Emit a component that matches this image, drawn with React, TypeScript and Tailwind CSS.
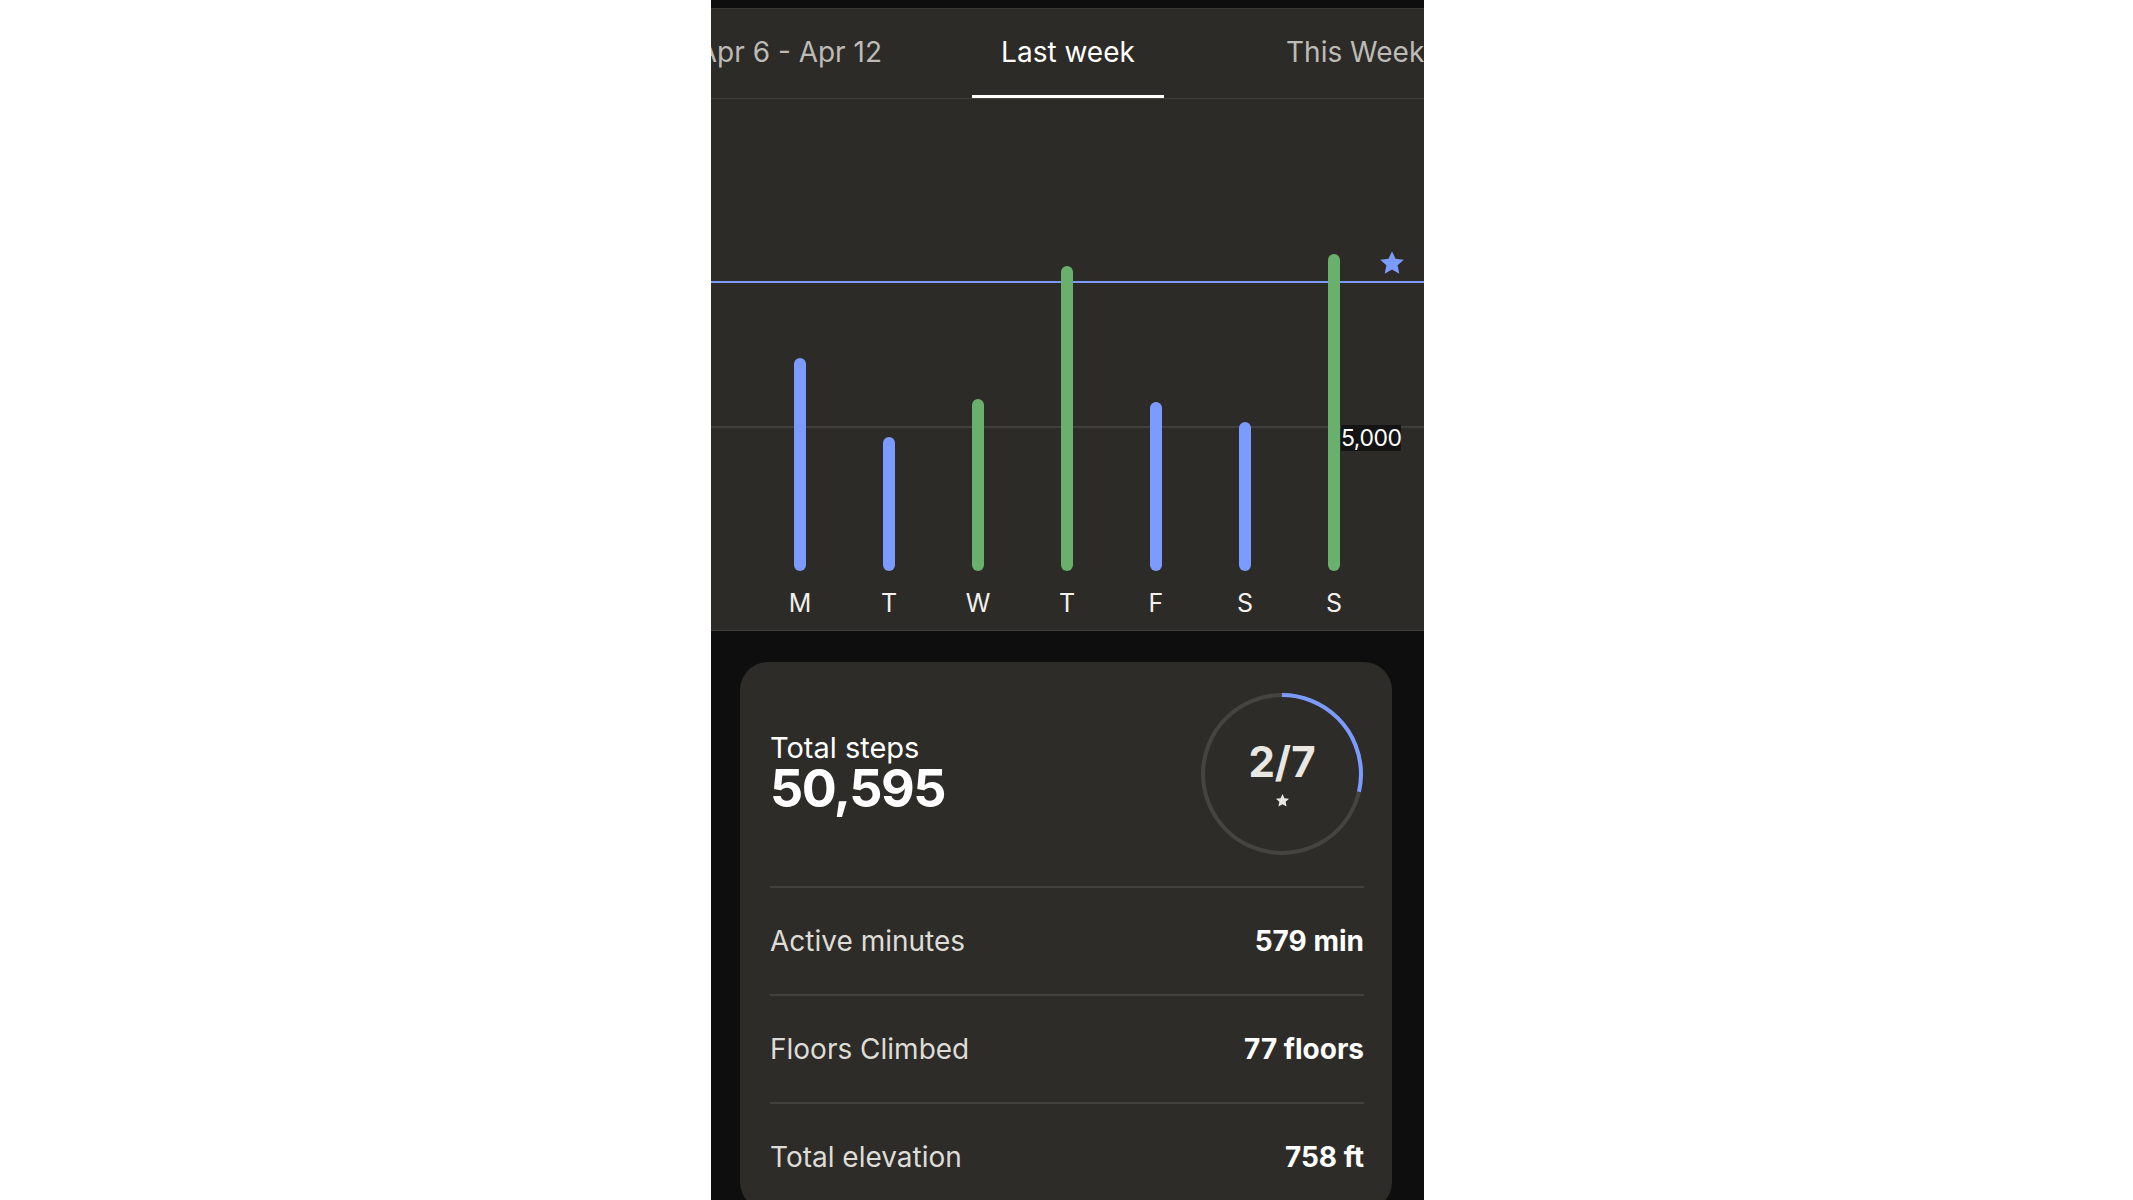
import React from 'react';

const days = [
  { label: 'M', top: 259, color: '#7c9bff' },
  { label: 'T', top: 338, color: '#7c9bff' },
  { label: 'W', top: 300, color: '#69b06d' },
  { label: 'T', top: 167, color: '#69b06d' },
  { label: 'F', top: 303, color: '#7c9bff' },
  { label: 'S', top: 323, color: '#7c9bff' },
  { label: 'S', top: 155, color: '#69b06d' },
];

const stats = [
  { label: 'Active minutes', value: '579 min' },
  { label: 'Floors Climbed', value: '77 floors' },
  { label: 'Total elevation', value: '758 ft' },
];

const STAR = '12,1.5 15.1,8.3 22.5,9.1 17,14.1 18.5,21.5 12,17.8 5.5,21.5 7,14.1 1.5,9.1 8.9,8.3';

const BAR_BOTTOM = 472;

function StepsRing() {
  const r = 79;
  const c = 2 * Math.PI * r;
  return (
    <div className="relative w-[170px] h-[170px] shrink-0">
      <svg width="170" height="170" viewBox="0 0 170 170" className="absolute inset-0">
        <circle cx="85" cy="85" r={r} fill="none" stroke="#45443f" strokeWidth="4" />
        <circle
          cx="85"
          cy="85"
          r={r}
          fill="none"
          stroke="#7c9bff"
          strokeWidth="4"
          strokeDasharray={`${(c * 2) / 7} ${c}`}
          transform="rotate(-90 85 85)"
        />
      </svg>
      <div className="absolute inset-0 flex flex-col items-center justify-center">
        <span className="text-[42px] font-bold leading-none text-[#e9e7e1]">2/7</span>
        <svg width="15" height="15" viewBox="0 0 24 24" className="mt-[10px]">
          <polygon points={STAR} fill="#e9e7e1" />
        </svg>
      </div>
    </div>
  );
}

export default function App() {
  return (
    <div className="w-full h-[1200px] overflow-hidden bg-white" style={{ fontFamily: 'Inter, "Noto Sans", sans-serif' }}>
      <div className="ml-[711px] w-[713px] h-[1200px] bg-[#0e0e0e] flex flex-col">
        {/* status strip */}
        <div className="h-[8px] shrink-0" />

        {/* range tabs */}
        <div className="h-[91px] shrink-0 bg-[#2c2b28] border-t border-[#3a3934] border-b border-b-[#403f3a] flex items-stretch text-[28px] whitespace-nowrap">
          <div className="w-[261px] shrink-0 overflow-hidden flex items-center justify-end pr-[90px] pb-[3px] text-[#bdbbb5]">
            Apr 6 - Apr 12
          </div>
          <div className="w-[192px] shrink-0 relative flex items-center justify-center pb-[3px] text-white">
            Last week
            <div className="absolute left-0 right-0 bottom-0 h-[3px] bg-white" />
          </div>
          <div className="flex-1 min-w-0 overflow-hidden flex items-center pl-[122px] pb-[3px] text-[#bdbbb5]">
            This Week
          </div>
        </div>

        {/* chart */}
        <div className="h-[532px] shrink-0 bg-[#2c2b28] border-b border-[#3d3c38] relative">
          <svg width="713" height="490" viewBox="0 0 713 490" className="block">
            <line x1="0" y1="328" x2="713" y2="328" stroke="#4a4944" strokeWidth="1.5" />
            <line x1="0" y1="183" x2="713" y2="183" stroke="#7c9bff" strokeWidth="2" />
            {days.map((d, i) => (
              <line
                key={i}
                x1={89 + i * 89}
                x2={89 + i * 89}
                y1={d.top + 6}
                y2={BAR_BOTTOM - 6}
                stroke={d.color}
                strokeWidth="12"
                strokeLinecap="round"
              />
            ))}
            <g transform="translate(667.5 150.5) scale(1.125)">
              <polygon points={STAR} fill="#7c9bff" />
            </g>
          </svg>
          <span className="absolute left-[630px] top-[326px] text-[23px] leading-[26px] tracking-[-0.5px] text-white bg-[#141414]">
            5,000
          </span>
          <div className="flex pl-[44.5px] h-[28px]">
            {days.map((d, i) => (
              <div key={i} className="w-[89px] text-center text-[25px] leading-[28px] text-[#f2f1ed]">
                {d.label}
              </div>
            ))}
          </div>
        </div>

        {/* summary card */}
        <div className="mt-[31px] ml-[29px] mr-[32px] rounded-[28px] bg-[#2d2c29] shrink-0">
          <div className="h-[224px] flex items-center justify-between pl-[30px] pr-[25px]">
            <div className="flex flex-col mt-[-3px]">
              <span className="text-[29px] leading-[32px] text-white">Total steps</span>
              <span className="text-[52px] leading-[50px] font-bold text-white tracking-[-1.5px]">50,595</span>
            </div>
            <StepsRing />
          </div>
          <div className="pl-[30px] pr-[28px]">
            {stats.map((s) => (
              <div key={s.label} className="h-[108px] border-t-2 border-[#42413c] flex items-center justify-between">
                <span className="text-[28px] text-[#dedcd6]">{s.label}</span>
                <span className="text-[28px] font-bold text-white">{s.value}</span>
              </div>
            ))}
          </div>
        </div>
      </div>
    </div>
  );
}
